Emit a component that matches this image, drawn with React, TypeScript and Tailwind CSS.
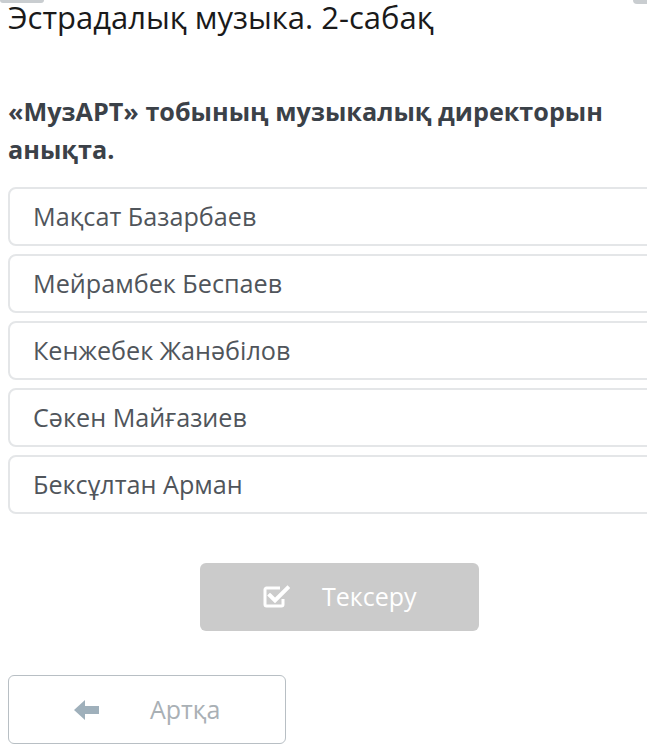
import React from "react";

const options = [
  "Мақсат Базарбаев",
  "Мейрамбек Беспаев",
  "Кенжебек Жанәбілов",
  "Сәкен Майғазиев",
  "Бексұлтан Арман",
];

export default function App() {
  return (
    <div
      className="w-[647px] h-[745px] overflow-hidden bg-white relative"
      style={{ fontFamily: '"Open Sans", "Noto Sans", sans-serif' }}
    >
      <div className="absolute left-0 top-0 w-[44px] h-[3px] rounded-b-full bg-[#c9cdd0]" />
      <div className="absolute right-0 top-0 w-[14px] h-[4px] rounded-bl-full bg-[#c9cdd0]" />
      <div className="pl-[8px]">
        <h1 className="text-[31px] leading-[34px] text-[#1a1a1a] font-normal">
          Эстрадалық музыка. 2-сабақ
        </h1>
        <p className="mt-[58px] text-[25.2px] leading-[38px] font-bold text-[#3b4148] pr-[20px]">
          «МузАРТ» тобының музыкалық директорын анықта.
        </p>
        <div className="mt-[19px] flex flex-col gap-[8px] w-[660px]">
          {options.map((o) => (
            <div
              key={o}
              className="h-[59px] rounded-[8px] border-2 border-[#e4e6e8] flex items-center pl-[23px] text-[25.2px] text-[#50555b]"
            >
              {o}
            </div>
          ))}
        </div>
        <div className="flex justify-center mt-[49px] pl-[24px]">
          <div className="w-[279px] h-[68px] rounded-[6px] bg-[#cbcbcb] flex items-center pl-[62px] text-white">
            <svg width="28" height="26" viewBox="0 0 28 26" fill="none">
              <path d="M18 4H4.5A1.5 1.5 0 0 0 3 5.5v15A1.5 1.5 0 0 0 4.5 22h15a1.5 1.5 0 0 0 1.5-1.5V15" stroke="white" strokeWidth="3" />
              <path d="M8 11.5l5 5L25.5 4" stroke="white" strokeWidth="4" strokeLinecap="square" />
            </svg>
            <span className="ml-[32px] text-[25px]">Тексеру</span>
          </div>
        </div>
        <div className="mt-[44px] w-[278px] h-[69px] rounded-[6px] border border-[#b8bfc4] flex items-center pl-[64px]">
          <svg width="27" height="22" viewBox="0 0 27 22">
            <path d="M1 11L12 1v6h14v8H12v6z" fill="#9fb0bb" />
          </svg>
          <span className="ml-[50px] text-[25px] text-[#a9b0b5]">Артқа</span>
        </div>
      </div>
    </div>
  );
}
